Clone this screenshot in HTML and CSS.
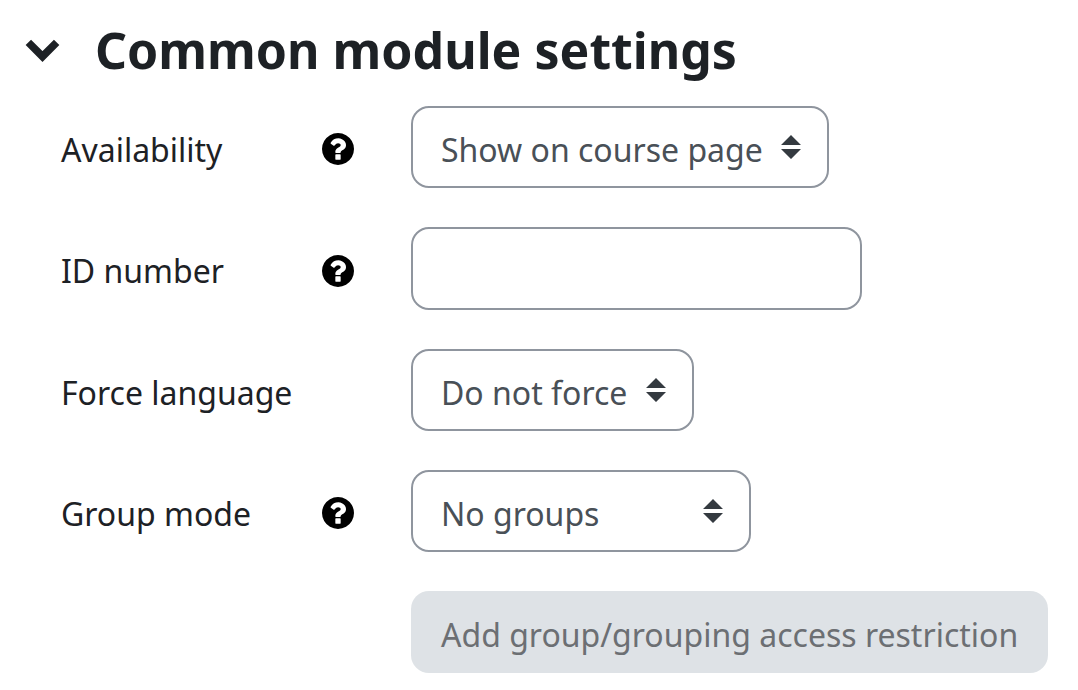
FILE: index.html
```html
<!DOCTYPE html>
<html lang="en">
<head>
    <meta charset="UTF-8">
    <meta name="viewport" content="width=device-width, initial-scale=1.0">
    <title>Common module settings</title>
    <link rel="stylesheet" href="styles.css">
</head>
<body>
    <svg class="sprite" aria-hidden="true">
        <symbol id="icon-help" viewBox="0 0 1536 1536">
            <path fill-rule="evenodd" d="M896 1248v-192q0-14-9-23t-23-9H672q-14 0-23 9t-9 23v192q0 14 9 23t23 9h192q14 0 23-9t9-23zm256-672q0-88-55.500-163T958 297t-170-41q-243 0-371 213-15 24 8 42l132 100q7 6 19 6 16 0 25-12 53-68 86-92 34-24 86-24 48 0 85.500 26t37.500 59q0 38-20 61t-68 45q-63 28-115.500 86.500T640 892v36q0 14 9 23t23 9h192q14 0 23-9t9-23q0-19 21.500-49.500T972 829q32-18 49-28.500t46-35 44.500-48 28-60.500 12.500-81zm384 192q0 209-103 385.500T1153.500 1433 768 1536t-385.500-103T103 1153.500 0 768t103-385.500T382.500 103 768 0t385.500 103T1433 382.500 1536 768z"/>
        </symbol>
    </svg>

    <form class="settings">
        <h2 class="settings-title">
            <button type="button" class="toggle" aria-label="Collapse" aria-expanded="true">
                <svg class="chevron" viewBox="0 0 34 22"><path d="M4 4l13 13L30 4"/></svg>
            </button>
            Common module settings
        </h2>

        <div class="row">
            <div class="row-label">
                <label for="visible">Availability</label>
                <button type="button" class="help" aria-label="Help with Availability"><svg><use href="#icon-help"/></svg></button>
            </div>
            <div class="select">
                <select id="visible">
                    <option>Show on course page</option>
                </select>
                <svg class="caret" viewBox="0 0 20 24"><path d="M10 0l10 10H0zM10 24L0 14h20z"/></svg>
            </div>
        </div>

        <div class="row">
            <div class="row-label">
                <label for="idnumber">ID number</label>
                <button type="button" class="help" aria-label="Help with ID number"><svg><use href="#icon-help"/></svg></button>
            </div>
            <input type="text" id="idnumber" class="text-input">
        </div>

        <div class="row">
            <div class="row-label">
                <label for="lang">Force language</label>
            </div>
            <div class="select">
                <select id="lang">
                    <option>Do not force</option>
                </select>
                <svg class="caret" viewBox="0 0 20 24"><path d="M10 0l10 10H0zM10 24L0 14h20z"/></svg>
            </div>
        </div>

        <div class="row">
            <div class="row-label">
                <label for="groupmode">Group mode</label>
                <button type="button" class="help" aria-label="Help with Group mode"><svg><use href="#icon-help"/></svg></button>
            </div>
            <div class="select select-groups">
                <select id="groupmode">
                    <option>No groups</option>
                </select>
                <svg class="caret" viewBox="0 0 20 24"><path d="M10 0l10 10H0zM10 24L0 14h20z"/></svg>
            </div>
        </div>

        <div class="row">
            <div class="row-label"></div>
            <button type="button" class="restriction" disabled>Add group/grouping access restriction</button>
        </div>
    </form>
</body>
</html>
```

FILE: styles.css
```css
* { box-sizing: border-box; }
body { margin: 0; background: #fff; color: #1d2125; font-family: "Noto Sans", sans-serif; font-size: 32px; }
button, input, select { font: inherit; }
.sprite { display: none; }
.settings { padding: 20px 16px 16px 24px; }

.settings-title { display: flex; align-items: center; gap: 34px; margin: 0 0 26px; font-size: 50px; line-height: 60px; font-weight: 700; }
.toggle { display: flex; padding: 0; border: 0; background: none; cursor: pointer; }
.chevron { width: 37px; height: 24px; fill: none; stroke: #1d2125; stroke-width: 7; }

.row { display: flex; align-items: center; padding-left: 37px; margin-bottom: 39px; }
.row:last-child { margin-bottom: 0; }
.row-label { display: flex; align-items: center; justify-content: space-between; flex: 0 0 293px; margin-right: 57px; padding-top: 4px; }
.help { display: flex; padding: 0; border: 0; background: none; cursor: pointer; }
.help svg { width: 32px; height: 32px; }

.select { position: relative; }
.select select { display: block; appearance: none; height: 82px; padding: 4px 64px 0 28px; border: 2px solid #8f959e; border-radius: 18px; background: #fff; color: #495057; }
.select-groups select { width: 340px; }
.caret { position: absolute; right: 28px; top: 29px; width: 20px; height: 24px; fill: #343a40; pointer-events: none; }
.text-input { width: 451px; height: 83px; padding: 4px 28px 0; border: 2px solid #8f959e; border-radius: 18px; color: #495057; }
.restriction { height: 82px; padding: 4px 30px 0; border: 0; border-radius: 18px; background: #dee2e6; color: #6c6f73; white-space: nowrap; }
```
